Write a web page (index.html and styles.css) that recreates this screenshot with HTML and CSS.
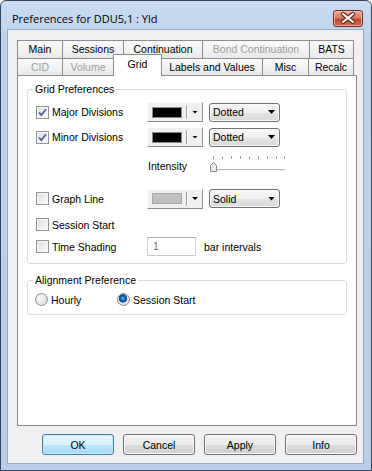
FILE: index.html
```html
<!DOCTYPE html>
<html lang="en">
<head>
    <meta charset="UTF-8" />
    <title>Preferences for DDU5,1 : Yld</title>
    <link rel="stylesheet" href="styles.css">
</head>
<body>
    <div class="window">
        <div class="titlebar">
            <span class="title">Preferences for DDU5,1 : Yld</span>
            <button class="close" title="Close">
                <svg width="28" height="15" viewBox="0 0 28 15">
                    <path d="M9 3 L19 11 M19 3 L9 11" stroke="#6a2a1e" stroke-width="4.2" stroke-linecap="round"/>
                    <path d="M9 3 L19 11 M19 3 L9 11" stroke="#ffffff" stroke-width="2.2" stroke-linecap="round"/>
                </svg>
            </button>
        </div>

        <div class="client">
            <div class="tabs">
                <div class="tab-row back">
                    <span class="tab t-main">Main</span>
                    <span class="tab t-sessions">Sessions</span>
                    <span class="tab t-cont">Continuation</span>
                    <span class="tab t-bond disabled">Bond Continuation</span>
                    <span class="tab t-bats">BATS</span>
                </div>
                <div class="tab-row front">
                    <span class="tab t-cid disabled">CID</span>
                    <span class="tab t-volume disabled">Volume</span>
                    <span class="tab t-grid active">Grid</span>
                    <span class="tab t-labels">Labels and Values</span>
                    <span class="tab t-misc">Misc</span>
                    <span class="tab t-recalc">Recalc</span>
                </div>
            </div>

            <div class="panel">
                <fieldset class="group grid-prefs">
                    <legend>Grid Preferences</legend>

                    <div class="row r-major">
                        <label class="check">
                            <span class="box">
                                <svg width="11" height="11" viewBox="0 0 11 11"><path d="M2 5.5 L4.3 8 L9 2.2" fill="none" stroke="#4a62a0" stroke-width="1.8"/></svg>
                            </span>
                            Major Divisions
                        </label>
                        <span class="colorpick"><span class="swatch black"></span><span class="sep"></span><span class="arrow small"></span></span>
                        <span class="select">Dotted<span class="arrow"></span></span>
                    </div>

                    <div class="row r-minor">
                        <label class="check">
                            <span class="box">
                                <svg width="11" height="11" viewBox="0 0 11 11"><path d="M2 5.5 L4.3 8 L9 2.2" fill="none" stroke="#4a62a0" stroke-width="1.8"/></svg>
                            </span>
                            Minor Divisions
                        </label>
                        <span class="colorpick"><span class="swatch black"></span><span class="sep"></span><span class="arrow small"></span></span>
                        <span class="select">Dotted<span class="arrow"></span></span>
                    </div>

                    <div class="row r-intensity">
                        <span class="intensity-label">Intensity</span>
                        <svg class="slider" width="76" height="22" viewBox="0 0 76 22">
                            <g stroke="#a0a0a0" stroke-width="1">
                                <line x1="4.5" y1="3" x2="4.5" y2="6"/>
                                <line x1="13.5" y1="3" x2="13.5" y2="6"/>
                                <line x1="22.5" y1="3" x2="22.5" y2="6"/>
                                <line x1="31.5" y1="3" x2="31.5" y2="6"/>
                                <line x1="40.5" y1="3" x2="40.5" y2="6"/>
                                <line x1="49.5" y1="3" x2="49.5" y2="6"/>
                                <line x1="58.5" y1="3" x2="58.5" y2="6"/>
                                <line x1="67.5" y1="3" x2="67.5" y2="6"/>
                                <line x1="75.5" y1="3" x2="75.5" y2="6"/>
                            </g>
                            <line x1="1" y1="16.5" x2="76" y2="16.5" stroke="#b4b4b4"/>
                            <line x1="1" y1="17.5" x2="76" y2="17.5" stroke="#f4f4f4"/>
                            <path d="M1.5 18.5 V12.5 L4.5 9.5 L7.5 12.5 V18.5 Z" fill="#ececec" stroke="#8a8a8a"/>
                        </svg>
                    </div>

                    <div class="row r-graph">
                        <label class="check"><span class="box"></span>Graph Line</label>
                        <span class="colorpick"><span class="swatch grey"></span><span class="sep"></span><span class="arrow small"></span></span>
                        <span class="select">Solid<span class="arrow"></span></span>
                    </div>

                    <div class="row r-session">
                        <label class="check"><span class="box"></span>Session Start</label>
                    </div>

                    <div class="row r-shading">
                        <label class="check"><span class="box"></span>Time Shading</label>
                        <span class="textbox">1</span>
                        <span class="suffix">bar intervals</span>
                    </div>
                </fieldset>

                <fieldset class="group align-prefs">
                    <legend>Alignment Preference</legend>
                    <div class="row r-align">
                        <label class="radio-item hourly"><span class="radio"></span>Hourly</label>
                        <label class="radio-item"><span class="radio on"></span>Session Start</label>
                    </div>
                </fieldset>
            </div>

            <div class="buttons">
                <button class="btn default">OK</button>
                <button class="btn">Cancel</button>
                <button class="btn">Apply</button>
                <button class="btn">Info</button>
            </div>
        </div>
    </div>
</body>
</html>
```

FILE: styles.css
```css
* {
    box-sizing: border-box;
    margin: 0;
    padding: 0;
}

body {
    font-family: "Liberation Sans", Arial, sans-serif;
    font-size: 10.5px;
    color: #000;
    background: #fff;
}

/* window frame */

.window {
    width: 372px;
    height: 471px;
    border: 1px solid #34465c;
    border-radius: 6px 6px 0 0;
    background: linear-gradient(#cbdcf0, #bdd2eb 40px, #b9cfe9);
    padding: 0 7px 6px 6px;
    display: flex;
    flex-direction: column;
}

.titlebar {
    height: 28px;
    padding-top: 6px;
    display: flex;
    align-items: center;
    justify-content: space-between;
}

.title {
    font-family: "Open Sans", sans-serif;
    font-size: 11px;
    margin-left: 5px;
}

.close {
    width: 30px;
    height: 17px;
    margin-right: 1px;
    border: 1px solid #6e2a20;
    border-radius: 3px;
    background: linear-gradient(#e9a796, #d77f6c 45%, #c4462f 55%, #d26a52);
    box-shadow: inset 0 0 0 1px rgba(255, 220, 210, 0.6);
    display: flex;
    align-items: center;
    justify-content: center;
}

.client {
    flex: 1;
    background: #f0f0f0;
    border: 1px solid #97aac2;
    padding: 10px 6px 0 9px;
}

/* tabs */

.tab-row {
    display: flex;
    height: 18px;
}

.tab-row.back .tab {
    padding-bottom: 1px;
}

.tab-row.front {
    height: 17px;
}

.tab {
    border-left: 1px solid #898c95;
    border-top: 1px solid #898c95;
    background: linear-gradient(#fbfbfb, #e9e9e9);
    display: flex;
    align-items: center;
    justify-content: center;
}

.tab:last-child {
    border-right: 1px solid #898c95;
}

.tab.disabled {
    color: #a0a0a0;
}

.tab.active {
    background: #fff;
    border-right: 1px solid #898c95;
    margin: -4px -1px 0 0;
    height: 22px;
    padding-bottom: 4px;
    position: relative;
    z-index: 2;
}

.t-main { width: 45px; }
.t-sessions { width: 61px; }
.t-cont { width: 79px; }
.t-bond { width: 107px; }
.t-bats { width: 45px; }

.t-cid { width: 45px; }
.t-volume { width: 51px; }
.t-grid { width: 49px; }
.t-labels { width: 101px; }
.t-misc { width: 46px; }
.t-recalc { width: 46px; }

.panel {
    height: 351px;
    background: #fff;
    border: 1px solid #898c95;
    padding: 0 9px;
}

/* group boxes */

.group {
    border: 1px solid #d5dfe5;
    border-radius: 3px;
    padding: 6px 0 7px 8px;
}

.group legend {
    margin-left: -3px;
    padding: 0 2px;
    line-height: 13px;
}

.grid-prefs {
    margin-top: 7px;
}

.align-prefs {
    margin-top: 10px;
    padding-top: 3px;
    padding-bottom: 5px;
}

.row {
    display: flex;
    align-items: center;
    height: 20px;
}

.r-minor { margin-top: 5px; }
.r-intensity { margin-top: 5px; height: 24px; }
.r-graph { margin-top: 13px; height: 19px; }
.r-session { margin-top: 7px; height: 19px; }
.r-shading { margin-top: 3px; height: 19px; }
.r-align { height: 19px; margin-left: -1px; }

.check {
    display: flex;
    align-items: center;
    gap: 3px;
    width: 111px;
}

.box {
    width: 13px;
    height: 13px;
    border: 1px solid #939393;
    background: linear-gradient(135deg, #dcdcdc, #fbfbfb);
    box-shadow: inset 0 0 0 1px #f6f6f6;
    display: flex;
    align-items: center;
    justify-content: center;
}

/* colour picker button */

.colorpick {
    width: 56px;
    height: 20px;
    display: flex;
    align-items: center;
    padding-left: 4px;
    background: #f0f0f0;
    border: 1px solid;
    border-color: #fcfcfc #9a9a9a #8a8a8a #fcfcfc;
}

.swatch {
    width: 30px;
    height: 11px;
    border: 1px solid #8a8a8a;
}

.swatch.black {
    background: #000;
}

.swatch.grey {
    background: #c0c0c0;
    border-color: #a8a8a8;
}

.sep {
    width: 2px;
    height: 14px;
    margin: 0 4px 0 4px;
    border-left: 1px solid #a0a0a0;
    border-right: 1px solid #fff;
}

.arrow {
    width: 7px;
    height: 4px;
    background: #000;
    clip-path: polygon(0 0, 100% 0, 50% 100%);
}

.arrow.small {
    width: 6px;
    height: 3px;
}

/* combo box */

.select {
    width: 71px;
    height: 19px;
    margin-left: 6px;
    border: 1px solid #707070;
    border-radius: 3px;
    background: linear-gradient(#f7f7f7, #efefef 50%, #e4e4e4 50%, #d9d9d9);
    box-shadow: inset 0 0 0 1px #fbfbfb;
    padding: 0 4px 0 3px;
    display: flex;
    align-items: center;
    justify-content: space-between;
}

.intensity-label {
    margin-left: 112px;
    width: 61px;
    padding-top: 3px;
}

.textbox {
    width: 49px;
    height: 19px;
    border: 1px solid #c8cbd2;
    border-top-color: #abadb3;
    background: #fff;
    color: #6d6d6d;
    padding-left: 5px;
    line-height: 17px;
}

.suffix {
    margin-left: 8px;
}

/* radios */

.radio-item {
    display: flex;
    align-items: center;
    gap: 3px;
}

.radio-item.hourly {
    width: 82px;
}

.radio {
    width: 13px;
    height: 13px;
    border-radius: 50%;
    border: 1px solid #8f8f8f;
    background: radial-gradient(circle at 40% 40%, #fafafa, #d6d6d6);
}

.radio.on {
    background: radial-gradient(circle at 45% 40%, #7fd0ff 0, #1a7fd0 1.6px, #0b4f93 3.2px, #2d4f73 3.9px, #e8e8e8 4.5px, #d6d6d6);
}

/* dialog buttons */

.buttons {
    display: flex;
    justify-content: flex-end;
    gap: 9px;
    margin-top: 8px;
}

.btn {
    width: 72px;
    height: 21px;
    font: inherit;
    color: #000;
    border: 1px solid #707070;
    border-radius: 3px;
    background: linear-gradient(#f2f2f2, #ebebeb 50%, #dddddd 50%, #cfcfcf);
    box-shadow: inset 0 0 0 1px #fbfbfb;
}

.btn.default {
    border-color: #3c7fb1;
    background: linear-gradient(#eaf6fd, #d9f0fc 50%, #bee6fd 50%, #a7d9f5);
    box-shadow: inset 0 0 0 1px #cbe8fa;
}
```
